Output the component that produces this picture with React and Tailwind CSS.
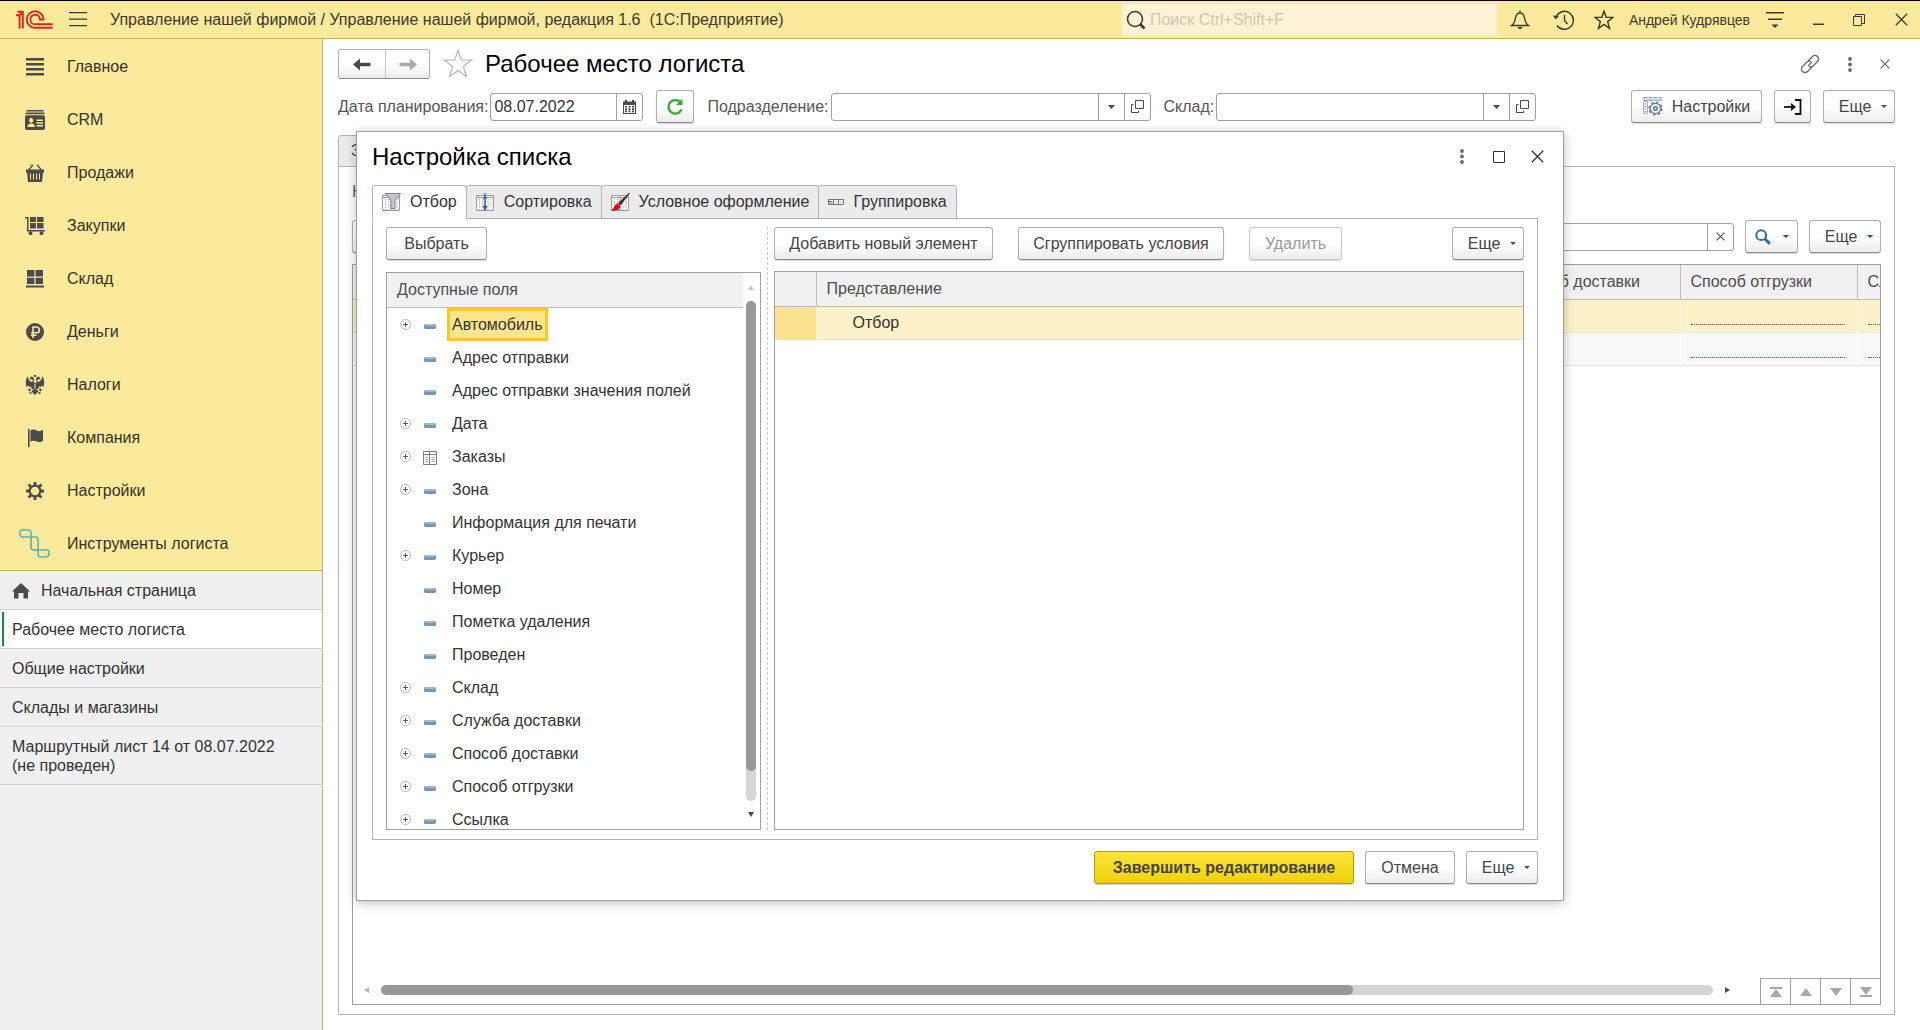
import React, { useState } from "react";

const sections = [
  { label: "Главное", icon: MainIcon },
  { label: "CRM", icon: CrmIcon },
  { label: "Продажи", icon: BasketIcon },
  { label: "Закупки", icon: CartIcon },
  { label: "Склад", icon: StockIcon },
  { label: "Деньги", icon: RubleIcon },
  { label: "Налоги", icon: EagleIcon },
  { label: "Компания", icon: FlagIcon },
  { label: "Настройки", icon: GearIcon },
  { label: "Инструменты логиста", icon: LogistIcon },
];

const openPages = [
  { label: "Начальная страница", home: true },
  { label: "Рабочее место логиста" },
  { label: "Общие настройки" },
  { label: "Склады и магазины" },
  { label: "Маршрутный лист 14 от 08.07.2022 (не проведен)" },
];

const fields = [
  { label: "Автомобиль", open: true },
  { label: "Адрес отправки" },
  { label: "Адрес отправки значения полей" },
  { label: "Дата", open: true },
  { label: "Заказы", open: true, table: true },
  { label: "Зона", open: true },
  { label: "Информация для печати" },
  { label: "Курьер", open: true },
  { label: "Номер" },
  { label: "Пометка удаления" },
  { label: "Проведен" },
  { label: "Склад", open: true },
  { label: "Служба доставки", open: true },
  { label: "Способ доставки", open: true },
  { label: "Способ отгрузки", open: true },
  { label: "Ссылка", open: true },
];

const dialogTabs = [
  { label: "Отбор", icon: FilterIcon },
  { label: "Сортировка", icon: SortIcon },
  { label: "Условное оформление", icon: BrushIcon },
  { label: "Группировка", icon: GroupIcon },
];

/* ---------- icons ---------- */

function Logo() {
  return (
    <svg width="37" height="19" viewBox="0 0 37 19" fill="none" stroke="#d9251d" strokeWidth="1.9">
      <path d="M0 5.2h3.6v13.3M1.5 1.8h5.3v16.7M3.6 5.2l2-2" />
      <path d="M27.4 9.6a8.3 8.3 0 1 0-8.4 8.2h17.7" />
      <path d="M24 9.6a4.8 4.8 0 1 0-4.9 4.7h17.6" />
      <path d="M28.3 9.6h-5.200" />
    </svg>
  );
}

function MainIcon() {
  return (
    <svg width="20" height="20" viewBox="0 0 20 20" fill="#4b4b4b">
      <path d="M1 1h18v2.4H1zM1 6h18v2.4H1zM1 11h18v2.4H1zM1 16h18v2.4H1z" />
    </svg>
  );
}

function CrmIcon() {
  return (
    <svg width="20" height="20" viewBox="0 0 20 20" fill="#4b4b4b">
      <path d="M2 0h16l1 1.6H1zM1 2.6h18l1 1.6H0z" />
      <rect y="5.2" width="20" height="14.8" rx="2" />
      <g fill="#fbe99c">
        <ellipse cx="6.2" cy="10.3" rx="2" ry="2.5" />
        <path d="M2.4 17c0-2.4 1.6-3 3.8-3.8C8.4 14 10 14.6 10 17zM11.5 9.5H18V11h-6.5zM11.5 12.2H18v1.5h-6.5zM11.5 15H18v1.5h-6.5z" />
      </g>
    </svg>
  );
}

function BasketIcon() {
  return (
    <svg width="20" height="20" viewBox="0 0 20 20">
      <path d="M3.500 7L7.500 2.500l-1-1M16.500 7l-4-4.500 1-1" fill="none" stroke="#4b4b4b" strokeWidth="1.3" />
      <path d="M1 6.5h18v3H1zM2 9.5h16l-1 9.500H3z" fill="#4b4b4b" />
      <path d="M5.5 10.5v6M8.5 10.5v6M11.5 10.5v6M14.5 10.5v6" stroke="#fbe99c" strokeWidth="1" />
    </svg>
  );
}

function CartIcon() {
  return (
    <svg width="20" height="20" viewBox="0 0 20 20" fill="#4b4b4b">
      <path d="M0 1h3.5v13H20v1.6H2V2.6H0z" />
      <path d="M5 1h6v5H5zM12 1h6.5v5H12zM5 7h6v5.5H5zM12 7h6.5v5.5H12z" />
      <circle cx="5.5" cy="17.2" r="1.9" />
      <circle cx="16.5" cy="17.2" r="1.9" />
    </svg>
  );
}

function StockIcon() {
  return (
    <svg width="20" height="20" viewBox="0 0 20 20" fill="#4b4b4b">
      <path d="M2 1h7.4v6.5H2zM10.6 1H18v6.5h-7.4zM2 8.7h7.4V15H2zM10.6 8.7H18V15h-7.4zM1 16.6h18v2H1z" />
    </svg>
  );
}

function RubleIcon() {
  return (
    <svg width="20" height="20" viewBox="0 0 20 20">
      <circle cx="10" cy="10" r="9" fill="#4b4b4b" />
      <path d="M8 16V5h3.5a2.9 2.9 0 0 1 0 5.8H6M6 13.3h5.5" fill="none" stroke="#fbe99c" strokeWidth="1.6" />
    </svg>
  );
}

function EagleIcon() {
  return (
    <svg width="20" height="20" viewBox="0 0 20 20" fill="#4b4b4b">
      <path d="M9 0h2v1.5L10 2.5 9 1.5zM6 1.5l2 .5 1 2v2.5L7 4.5 4.5 4zM14 1.5l-2 .5-1 2v2.5l2-2 2.5-.5z" />
      <path d="M2.5 1.5L4 5l2 2 2-1 2 2 2-1 .5-1 1.5 1 2-2 1.5-3.500C19.5 4 19.5 9 18.5 12l-2-1.5-.5 2-1.5-1.5-1 2.5L10 15l-3.5-1.5-1-2.5L4 12.5l-.5-2-2 1.5C.5 9 .5 4 2.5 1.5z" />
      <path d="M8 14.5h4l1.5 2L11 19l-1 1-1-1-2.5-2.500zM3 14l2.5-.5.5 2L4 16.5zM17 14l-2.5-.5-.5 2 2 1zM4 17.5l2-.5 1 1.500-2 .5zM16 17.5l-2-.5-1 1.500 2 .5z" />
      <path d="M9.5 8.5h1v5h-1z" fill="#fbe99c" />
    </svg>
  );
}

function FlagIcon() {
  return (
    <svg width="20" height="20" viewBox="0 0 20 20" fill="#4b4b4b">
      <path d="M3 1h1.6v18H3zM5.4 2.5c2.6-1.8 4.6-.7 6.6.1s4 .9 6-.8v11c-2 1.5-4 1.5-6 .7s-4-1.3-6.6.3z" />
    </svg>
  );
}

function GearIcon() {
  return (
    <svg width="20" height="20" viewBox="0 0 20 20" fill="none" stroke="#4b4b4b">
      <circle cx="10" cy="10" r="5.3" strokeWidth="2.2" />
      <path
        d="M10 1v3M10 16v3M1 10h3M16 10h3M3.6 3.6l2.2 2.2M14.2 14.2l2.2 2.2M3.6 16.4l2.2-2.2M14.2 5.8l2.2-2.2"
        strokeWidth="2.8"
      />
    </svg>
  );
}

function LogistIcon() {
  return (
    <svg width="32" height="30" viewBox="0 0 32 30" fill="none" stroke="#58b7b3" strokeWidth="1.6">
      <path d="M1 3a2 2 0 0 1 2-2h6a3 3 0 0 1 3 3v14a3 3 0 0 0 3 3h13a2 2 0 0 1 2 2v2a3 3 0 0 1-3 3H22a3 3 0 0 1-3-3V11a3 3 0 0 0-3-3H4a3 3 0 0 1-3-3z" />
      <path d="M12 8v10a3 3 0 0 0 3 3h4" opacity=".5" />
    </svg>
  );
}

function HomeIcon() {
  return (
    <svg width="18" height="16" viewBox="0 0 18 16" fill="#4b4b4b">
      <path d="M9 0l9 8.5h-2v7h-4.5V10h-5v5.5H2v-7H0z" />
    </svg>
  );
}

function SearchIcon() {
  return (
    <svg width="20" height="20" viewBox="0 0 20 20" fill="none" stroke="#3d3a2c">
      <circle cx="9" cy="9" r="7.5" strokeWidth="1.5" />
      <path d="M14 14l4.5 4.5" strokeWidth="2.6" />
    </svg>
  );
}

function BellIcon() {
  return (
    <svg width="20" height="20" viewBox="0 0 20 20" fill="none" stroke="#3d3a2c" strokeWidth="1.4">
      <path d="M10 .500v2M1.500 15.500c3-2 3.500-4.500 4-7.500.500-3.200 2-5 4.500-5s4 1.800 4.500 5c.500 3 1 5.500 4 7.500z" />
      <path d="M7 17h6l-3 2.6z" fill="#3d3a2c" stroke="none" />
    </svg>
  );
}

function HistoryIcon() {
  return (
    <svg width="22" height="20" viewBox="0 0 22 20" fill="none" stroke="#3d3a2c" strokeWidth="1.4">
      <path d="M4.5 6A9 9 0 1 1 5 15.5M12.5 5v5.5l3 3.5" />
      <path d="M1 5.5l6 .5-3.5 3.5z" fill="#3d3a2c" stroke="none" />
    </svg>
  );
}

function StarIcon({ size, color, width }) {
  return (
    <svg width={size} height={size} viewBox="0 0 20 20" fill="none" stroke={color} strokeWidth={width}>
      <path d="M10 .900l2.200 6.400 6.900.1-5.500 4.200 2 6.800-5.600-4-5.600 4 2-6.800L.900 7.400l6.900-.1z" />
    </svg>
  );
}

function ServiceMenuIcon() {
  return (
    <svg width="18" height="18" viewBox="0 0 18 18" fill="#3d3a2c">
      <path d="M0 1h18v1.4H0zM2 7.5h14v1.4H2zM5.5 13.5h7L9 17z" />
    </svg>
  );
}

function CloseIcon({ size = 13, color = "#3d3a2c", width = 1.3 }) {
  return (
    <svg width={size} height={size} viewBox="0 0 13 13" stroke={color} strokeWidth={width}>
      <path d="M.8.8l11.4 11.4M12.2.8L.8 12.2" />
    </svg>
  );
}

function DotsIcon() {
  return (
    <svg width="4" height="15" viewBox="0 0 4 15" fill="#6b6b6b">
      <circle cx="2" cy="2" r="1.9" />
      <circle cx="2" cy="7.5" r="1.9" />
      <circle cx="2" cy="13" r="1.9" />
    </svg>
  );
}

function LinkIcon() {
  return (
    <svg width="20" height="20" viewBox="0 0 20 20" fill="none" stroke="#6b6b6b" strokeWidth="1.4" strokeLinecap="round">
      <path d="M8.5 6.5l4-4a3.4 3.4 0 0 1 5 5l-4.500 4.500a3.4 3.4 0 0 1-3.5.8M11.5 13.5l-4 4a3.4 3.4 0 0 1-5-5L7 8a3.4 3.4 0 0 1 3.5-.8M8.500 11.500l3-3" />
    </svg>
  );
}

function ArrowIcon({ color, flip }) {
  return (
    <svg width="18" height="13" viewBox="0 0 18 13" fill={color} className={flip ? "rotate-180" : ""}>
      <path d="M0 6.5L7 .5v4.2h10.5v3.6H7v4.2z" />
    </svg>
  );
}

function Caret() {
  return (
    <svg width="6" height="3" viewBox="0 0 6 3" fill="#4b4b4b">
      <path d="M0 0h6L3 3z" />
    </svg>
  );
}

function DropIcon() {
  return (
    <svg width="7" height="4" viewBox="0 0 7 4" fill="#4b4b4b">
      <path d="M0 0h7L3.500 4z" />
    </svg>
  );
}

function OpenIcon() {
  return (
    <svg width="13" height="13" viewBox="0 0 13 13" fill="none" stroke="#4b4b4b" strokeWidth="1">
      <path d="M4.5.5h8v8h-8zM2.5 4.5h-2v8h7v-2" />
    </svg>
  );
}

function CalendarIcon() {
  return (
    <svg width="13" height="14" viewBox="0 0 13 14" fill="#4b4b4b">
      <path d="M2 0h2v2H2zM9 0h2v2H9zM0 1.5h13V14H0z" />
      <path d="M1 5h11v8H1z" fill="#fff" />
      <path d="M2 6h2v1.600H2zM5.500 6h2v1.600h-2zM9 6h2v1.600H9zM2 8.300h2v1.600H2zM5.500 8.300h2v1.600h-2zM9 8.300h2v1.600H9zM2 10.600h2v1.600H2zM5.500 10.600h2v1.600h-2zM9 10.600h2v1.600H9z" />
    </svg>
  );
}

function RefreshIcon() {
  return (
    <svg width="18" height="20" viewBox="0 0 18 20" fill="none" stroke="#3aaa35" strokeWidth="2.4">
      <path d="M14.5 5.5A6.8 6.8 0 1 0 15.5 12.5" />
      <path d="M16.5 1.5V8H10z" fill="#3aaa35" stroke="none" />
    </svg>
  );
}

function SettingsIcon() {
  return (
    <svg width="20" height="19" viewBox="0 0 20 19" fill="none">
      <path d="M.5.5h18v3H.5z" fill="#cfdbea" stroke="#93a5bd" strokeDasharray="4 1" />
      <path d="M.5 4.5h4v12h-4z" fill="#fff" stroke="#a9b4c4" />
      <path d="M1.5 7h2M1.5 9.5h2M1.5 12h2M1.5 14.5h2" stroke="#8a97aa" />
      <circle cx="12.5" cy="11.5" r="5.2" fill="#eef2f6" stroke="#6d7780" strokeWidth="1.2" />
      <circle cx="12.5" cy="11.5" r="6.4" stroke="#6d7780" strokeWidth="1.4" strokeDasharray="2.500 2.500" />
      <circle cx="12.5" cy="11.5" r="1.8" stroke="#50749a" strokeWidth="1.4" />
    </svg>
  );
}

function ExportIcon() {
  return (
    <svg width="18" height="16" viewBox="0 0 18 16" fill="none" stroke="#111" strokeWidth="1.8">
      <path d="M11 1h5.5v14H11" />
      <path d="M0 8h8" />
      <path d="M7 4l5 4-5 4z" fill="#111" stroke="none" />
    </svg>
  );
}

function LensIcon() {
  return (
    <svg width="16" height="16" viewBox="0 0 16 16" fill="none" stroke="#2d6ea3">
      <circle cx="6.2" cy="6.2" r="4.9" strokeWidth="2" />
      <path d="M9.8 9.8l5 5" strokeWidth="3" />
    </svg>
  );
}

function Sheet() {
  return (
    <>
      <path d="M.5 2.5h17v15H.5z" fill="#fff" stroke="#9a9a9a" />
      <path d="M.5 4.5h17M9 2.5v15" stroke="#9a9a9a" />
      <path d="M3.5 6v11M6.5 6v11M12 6v11M15 6v11" stroke="#b5b5b5" strokeDasharray="1 1" />
    </>
  );
}

function FilterIcon() {
  return (
    <svg width="19" height="19" viewBox="0 0 19 19" fill="none">
      <Sheet />
      <path d="M3 .5h15.5L13 7v8.500H9V7z" fill="#c3c6ca" stroke="#85898e" />
    </svg>
  );
}

function SortIcon() {
  return (
    <svg width="19" height="19" viewBox="0 0 19 19" fill="none">
      <Sheet />
      <path d="M7 3h4v14H7z" fill="#fff" />
      <path d="M9 3v12" stroke="#2c5f9e" strokeWidth="1.6" />
      <path d="M6.5 13h5L9 18zM6.5 5.5h5L9 2z" fill="#2c5f9e" />
      <path d="M7.5 0l1.5 2L10.5 0" stroke="#777" />
    </svg>
  );
}

function BrushIcon() {
  return (
    <svg width="19" height="19" viewBox="0 0 19 19" fill="none">
      <Sheet />
      <path d="M18.5 0L7.5 10l2 2z" fill="#4a2a22" stroke="#4a2a22" />
      <path d="M6.5 10.5l3 2.5c0 3-4 5.5-9.5 4.5 3-1.5 3-6 6.5-7z" fill="#e30613" />
    </svg>
  );
}

function GroupIcon() {
  return (
    <svg width="16" height="6" viewBox="0 0 16 6" fill="#fff" stroke="#70757c">
      <path d="M.5.5h5v5h-5zM5.5.5h5v5h-5zM10.5.5h5v5h-5z" />
      <path d="M1 2.500h3.500M1 4h3.500M7.500 3h1M12.500 3h1" />
    </svg>
  );
}

function ExpandIcon() {
  return (
    <svg width="11" height="11" viewBox="0 0 11 11" fill="none">
      <circle cx="5.5" cy="5.5" r="5" stroke="#b4b4b4" />
      <path d="M3 5.5h5M5.5 3v5" stroke="#5c5c5c" />
    </svg>
  );
}

function FieldIcon() {
  return (
    <svg width="12" height="5" viewBox="0 0 12 5">
      <rect width="12" height="5" rx="1.5" fill="#7599b5" />
      <rect x="1" width="10" height="2" rx="1" fill="#9fbacd" />
    </svg>
  );
}

function TableIcon() {
  return (
    <svg width="14" height="14" viewBox="0 0 14 14" fill="none" stroke="#7b7b8c">
      <path d="M.5.5h13v13H.5zM.5 3.5h13M6.500.5v13" />
      <path d="M2 6.5h3M2 8.5h3M2 10.5h3M8.5 6.5H12M8.5 8.5H12M8.5 10.5H12" stroke="#b0b0bd" />
    </svg>
  );
}

/* ---------- controls ---------- */

function Button({ children, className = "px-4", ...props }) {
  return (
    <button
      type="button"
      className={`h-[33px] shrink-0 flex items-center justify-center rounded-[3px] border border-[#b0b0b0] border-b-[#8a8a8a] bg-linear-to-b from-white from-50% to-[#ececec] text-[#444] shadow-[0_1px_1px_rgba(0,0,0,0.15)] whitespace-nowrap disabled:text-[#999] disabled:border-[#c8c8c8] ${className}`}
      {...props}
    >
      {children}
    </button>
  );
}

function MoreButton({ className = "w-[72px]" }) {
  return (
    <Button className={`gap-[10px] pl-2 ${className}`}>
      Еще
      <Caret />
    </Button>
  );
}

function PickerField({ id, label }) {
  return (
    <div className="flex items-center">
      <label htmlFor={id} className="mr-[2px] text-[#555]">{label}</label>
      <div className="flex h-7 w-[320px] rounded-[3px] border border-[#a0a0a0]">
        <input id={id} type="text" className="min-w-0 flex-1 px-1 outline-none" />
        <button type="button" aria-label="Выбрать из списка" className="w-[26px] flex items-center justify-center border-l border-[#a0a0a0]">
          <DropIcon />
        </button>
        <button type="button" aria-label="Открыть" className="w-[26px] flex items-center justify-center border-l border-[#a0a0a0]">
          <OpenIcon />
        </button>
      </div>
    </div>
  );
}

/* ---------- page parts ---------- */

function Header() {
  return (
    <header className="flex h-[39px] shrink-0 items-center border-t border-b border-t-black border-b-[#c9b36a] bg-[#fbe99c] text-[#3d3a2c]">
      <div className="ml-4"><Logo /></div>
      <button type="button" aria-label="Меню" className="ml-4">
        <svg width="18" height="15" viewBox="0 0 18 15" fill="#3d3a2c">
          <path d="M0 0h18v1.3H0zM0 6.5h18v1.3H0zM0 13h18v1.3H0z" />
        </svg>
      </button>
      <span className="ml-[23px] whitespace-nowrap">
        Управление нашей фирмой / Управление нашей фирмой, редакция 1.6&nbsp; (1С:Предприятие)
      </span>
      <label className="ml-auto flex h-8 w-[375px] items-center rounded-[2px] bg-[#fdf2d3] pl-1">
        <SearchIcon />
        <input
          type="text"
          aria-label="Поиск"
          placeholder="Поиск Ctrl+Shift+F"
          className="ml-1 min-w-0 flex-1 bg-transparent outline-none placeholder:text-[#cfc6b4]"
        />
      </label>
      <button type="button" aria-label="Уведомления" className="flex w-[46px] justify-center"><BellIcon /></button>
      <button type="button" aria-label="История" className="flex w-10 justify-center"><HistoryIcon /></button>
      <button type="button" aria-label="Избранное" className="flex w-[42px] justify-center">
        <StarIcon size="20" color="#3d3a2c" width="1.4" />
      </button>
      <span className="ml-1 text-sm whitespace-nowrap">Андрей Кудрявцев</span>
      <button type="button" aria-label="Сервис" className="flex w-[50px] justify-center"><ServiceMenuIcon /></button>
      <button type="button" aria-label="Свернуть" className="flex w-9 justify-center">
        <svg width="11" height="10" viewBox="0 0 11 10" fill="#3d3a2c"><path d="M0 8.5h11V10H0z" /></svg>
      </button>
      <button type="button" aria-label="Восстановить" className="flex w-[46px] justify-center">
        <svg width="12" height="12" viewBox="0 0 12 12" fill="none" stroke="#3d3a2c">
          <path d="M.5 2.5h8v9h-8zM2.5 2.5v-2h9v9h-3" />
        </svg>
      </button>
      <button type="button" aria-label="Закрыть" className="flex w-[38px] justify-center"><CloseIcon /></button>
    </header>
  );
}

function Sidebar() {
  return (
    <aside className="flex w-[323px] shrink-0 flex-col border-r border-[#c9b36a] bg-[#f0f0f0]">
      <nav className="border-b border-[#c9b36a] bg-[#fbe99c] pt-px text-[#33332b]">
        {sections.map(({ label, icon: Icon }) => (
          <a key={label} href="#" className="flex h-[53px] items-center">
            <span className="flex w-[67px] justify-center pl-[3px]"><Icon /></span>
            {label}
          </a>
        ))}
      </nav>
      <nav className="text-[#333]">
        {openPages.map((page, i) => (
          <a
            key={page.label}
            href="#"
            className={`relative flex items-center border-b border-[#d3d3d3] pt-[10px] pr-8 pb-[9px] pl-3 leading-[19px] ${i === 1 ? "bg-white" : ""}`}
          >
            {i === 1 && <span className="absolute left-[2px] top-[2px] bottom-[2px] w-[2px] bg-[#0a9448]" />}
            {page.home && <span className="mr-[11px]"><HomeIcon /></span>}
            {page.label}
          </a>
        ))}
      </nav>
    </aside>
  );
}

function OrdersTable() {
  return (
    <div className="mt-[11px] flex min-h-0 flex-1 flex-col overflow-hidden border border-[#a0a0a0]">
      <table className="w-full table-fixed text-left text-[#4d4d4d]">
        <colgroup>
          <col />
          <col className="w-[177px]" />
          <col className="w-[177px]" />
          <col className="w-[23px]" />
        </colgroup>
        <thead>
          <tr className="h-[34px] bg-[#f1f1f1]">
            <th className="border-b border-[#bdbdbd]" />
            {["Способ доставки", "Способ отгрузки", "Служба доставки"].map((name) => (
              <th key={name} className="overflow-hidden border-b border-l border-[#bdbdbd] pl-[10px] font-normal whitespace-nowrap">
                {name}
              </th>
            ))}
          </tr>
        </thead>
        <tbody>
          {["bg-[#fcf1c8]", "bg-[#f9f9f9]"].map((bg) => (
            <tr key={bg} className={`h-[33px] border-b border-[#e4e4e4] ${bg}`}>
              <td />
              <td />
              <td className="border-l border-white/60 px-[10px] pb-[7px] align-bottom">
                <div className="mr-[2px] border-b border-dotted border-[#b4473c]" />
              </td>
              <td className="border-l border-white/60 pb-[7px] pl-[10px] align-bottom">
                <div className="border-b border-dotted border-[#b4473c]" />
              </td>
            </tr>
          ))}
        </tbody>
      </table>
      <div className="mt-auto flex items-end">
        <div className="flex h-7 flex-1 items-center pr-[30px] pl-[11px]">
          <svg width="6" height="6" viewBox="0 0 6 6" fill="#b9b9b9"><path d="M5 0v6L0 3z" /></svg>
          <div className="mx-[11px] h-[10px] flex-1 rounded-full bg-[#d5d5d5]">
            <div className="h-full w-[73%] rounded-full bg-[#989898]" />
          </div>
          <svg width="6" height="6" viewBox="0 0 6 6" fill="#4b4b4b"><path d="M1 0v6l5-3z" /></svg>
        </div>
        <div className="flex h-[26px] border-t border-[#a0a0a0]">
          {[
            ["В начало", "M1 0h12v2H1zM7 2l6 8H1z"],
            ["Вверх", "M7 1l6 8H1z"],
            ["Вниз", "M7 9L1 1h12z"],
            ["В конец", "M7 8L1 0h12zM1 8h12v2H1z"],
          ].map(([name, d]) => (
            <button key={name} type="button" aria-label={name} className="flex w-[30px] items-center justify-center border-l border-[#a0a0a0]">
              <svg width="14" height="10" viewBox="0 0 14 10" fill="#a8a8a8"><path d={d} /></svg>
            </button>
          ))}
        </div>
      </div>
    </div>
  );
}

function Workplace() {
  return (
    <div className="flex min-w-0 flex-1 flex-col pt-[10px] pr-[25px] pb-[15px] pl-[15px]">
      <div className="flex items-center">
        <div className="flex h-[30px] rounded-[3px] border border-[#b0b0b0] border-b-[#8a8a8a] bg-linear-to-b from-white from-50% to-[#ececec]">
          <button type="button" aria-label="Назад" className="flex w-[46px] items-center justify-center"><ArrowIcon color="#4b4b4b" /></button>
          <button type="button" aria-label="Вперед" className="flex w-11 items-center justify-center border-l border-[#c8c8c8]">
            <ArrowIcon color="#ababab" flip />
          </button>
        </div>
        <button type="button" aria-label="В избранное" className="ml-[13px]"><StarIcon size="30" color="#b5b5b5" width="0.8" /></button>
        <h1 className="ml-3 text-2xl leading-[30px] text-black">Рабочее место логиста</h1>
        <div className="ml-auto flex items-center gap-7 pr-[5px]">
          <button type="button" aria-label="Ссылка"><LinkIcon /></button>
          <button type="button" aria-label="Еще"><DotsIcon /></button>
          <button type="button" aria-label="Закрыть"><CloseIcon size={10} color="#6b6b6b" width={1.6} /></button>
        </div>
      </div>

      <div className="mt-[11px] flex items-center">
        <label htmlFor="plan-date" className="mr-[2px] text-[#555]">Дата планирования:</label>
        <div className="flex h-7 w-[153px] rounded-[3px] border border-[#a0a0a0]">
          <input id="plan-date" type="text" defaultValue="08.07.2022" className="min-w-0 flex-1 px-[3px] text-[#333] outline-none" />
          <button type="button" aria-label="Календарь" className="flex w-[26px] items-center justify-center border-l border-[#a0a0a0]">
            <CalendarIcon />
          </button>
        </div>
        <Button className="mx-[13px] w-[38px]" aria-label="Обновить"><RefreshIcon /></Button>
        <PickerField id="department" label="Подразделение:" />
        <div className="w-[13px]" />
        <PickerField id="warehouse" label="Склад:" />
        <div className="ml-auto flex gap-3">
          <Button className="w-[131px] gap-[9px]"><SettingsIcon />Настройки</Button>
          <Button className="w-[37px]" aria-label="Выгрузить"><ExportIcon /></Button>
          <MoreButton />
        </div>
      </div>

      <div className="mt-3 -mb-px flex">
        <button type="button" className="h-8 rounded-t-[3px] border border-[#b4b4b4] bg-[#ebebeb] px-3 text-[#444]">Заказы</button>
      </div>
      <div className="flex min-h-0 flex-1 flex-col border border-[#b4b4b4] px-[13px] pt-[15px] pb-[9px]">
        <a href="#" className="self-start leading-5 text-[#2d6ea3]">Настройки</a>
        <div className="mt-[18px] flex items-center">
          <Button className="w-[101px]" aria-label="Создать" />
          <div className="ml-auto flex h-7 w-[420px] rounded-[3px] border border-[#a0a0a0]">
            <input type="text" aria-label="Поиск в списке" className="min-w-0 flex-1 px-1 outline-none" />
            <button type="button" aria-label="Очистить" className="flex w-[26px] items-center justify-center border-l border-[#a0a0a0]">
              <CloseIcon size={9} color="#4b4b4b" width={1.6} />
            </button>
          </div>
          <Button className="mx-[11px] w-[53px] gap-3" aria-label="Найти"><LensIcon /><Caret /></Button>
          <MoreButton />
        </div>
        <OrdersTable />
      </div>
    </div>
  );
}

function FieldTree() {
  const [selected, setSelected] = useState("Автомобиль");

  return (
    <div className="mt-3 flex min-h-0 flex-1 border border-[#a0a0a0]">
      <div className="flex min-w-0 flex-1 flex-col">
        <div className="h-[35px] shrink-0 border-b border-[#bdbdbd] bg-[#f1f1f1] pl-[10px] leading-[33px] text-[#4d4d4d]">Доступные поля</div>
        <ul className="min-h-0 flex-1 basis-0 overflow-hidden text-[#333]">
          {fields.map((field) => (
            <li key={field.label} className="flex h-[33px] items-center pl-[13px]">
              <span className="w-[11px]">{field.open && <ExpandIcon />}</span>
              <span className="flex w-9 justify-center pt-[3px] pr-1 pl-[6px]">{field.table ? <TableIcon /> : <FieldIcon />}</span>
              <button
                type="button"
                onClick={() => setSelected(field.label)}
                className={`h-[33px] border-[3px] px-[2px] whitespace-nowrap ${
                  selected === field.label ? "border-[#f3c92e] bg-[#fbe58f]" : "border-transparent"
                }`}
              >
                {field.label}
              </button>
            </li>
          ))}
        </ul>
      </div>
      <div className="flex w-[17px] shrink-0 flex-col items-center py-[12px] pr-px">
        <svg width="6" height="5" viewBox="0 0 6 5" fill="#c4c4c4"><path d="M3 0l3 5H0z" /></svg>
        <div className="my-[11px] w-[10px] flex-1 rounded-full bg-[#d5d5d5]">
          <div className="h-[94%] rounded-full bg-[#989898]" />
        </div>
        <svg width="6" height="5" viewBox="0 0 6 5" fill="#4b4b4b"><path d="M3 5L0 0h6z" /></svg>
      </div>
    </div>
  );
}

function ListSettingsDialog() {
  const [tab, setTab] = useState("Отбор");

  return (
    <div
      role="dialog"
      aria-label="Настройка списка"
      className="absolute top-[92px] right-[356px] bottom-[129px] left-[33px] flex flex-col border border-[#a0a0a0] bg-white pr-[25px] pb-4 pl-[15px] shadow-[0_2px_10px_rgba(0,0,0,0.25)]"
    >
      <div className="mb-1 flex h-[49px] shrink-0 items-center">
        <h2 className="text-2xl text-black">Настройка списка</h2>
        <div className="-mr-[6px] ml-auto flex items-center gap-[26px]">
          <button type="button" aria-label="Еще" className="mr-[3px]"><DotsIcon /></button>
          <button type="button" aria-label="Развернуть">
            <svg width="12" height="12" viewBox="0 0 12 12" fill="none" stroke="#333"><path d="M.5.5h11v11H.5z" /></svg>
          </button>
          <button type="button" aria-label="Закрыть"><CloseIcon color="#333" /></button>
        </div>
      </div>

      <div className="relative z-10 -mb-px flex h-[34px] shrink-0" role="tablist">
        {dialogTabs.map(({ label, icon: Icon }) => (
          <button
            key={label}
            type="button"
            role="tab"
            aria-selected={tab === label}
            onClick={() => setTab(label)}
            className={`-mr-px flex items-center gap-[9px] rounded-t-[3px] border border-[#b4b4b4] px-[9px] text-[#333] whitespace-nowrap ${
              tab === label ? "border-b-white bg-white" : "bg-[#ebebeb]"
            }`}
          >
            <Icon />
            {label}
          </button>
        ))}
      </div>

      <div className="flex min-h-0 flex-1 border border-[#b4b4b4] px-[13px] pt-2 pb-[9px]">
        <div className="flex w-[375px] shrink-0 flex-col">
          <Button className="w-[101px] self-start">Выбрать</Button>
          <FieldTree />
        </div>
        <div className="mx-[6px] border-l border-dashed border-[#c8c8c8]" />
        <div className="flex min-w-0 flex-1 flex-col">
          <div className="flex">
            <Button className="w-[219px]">Добавить новый элемент</Button>
            <Button className="ml-[25px] w-[206px]">Сгруппировать условия</Button>
            <Button className="ml-[25px] w-[93px]" disabled>Удалить</Button>
            <MoreButton className="ml-auto w-[72px]" />
          </div>
          <div className="mt-[11px] min-h-0 flex-1 border border-[#a0a0a0]">
            <table className="w-full table-fixed text-left">
              <colgroup>
                <col className="w-[41px]" />
                <col />
              </colgroup>
              <thead>
                <tr className="h-[34px] bg-[#f1f1f1] text-[#4d4d4d]">
                  <th className="border-b border-[#bdbdbd]" />
                  <th className="border-b border-l border-[#bdbdbd] pl-[10px] font-normal">Представление</th>
                </tr>
              </thead>
              <tbody>
                <tr className="h-[33px] border-b border-[#e4e4e4] bg-[#fcf1c8] text-[#333]">
                  <td className="bg-[#fce28f]" />
                  <td className="border-l border-[#fdf6dc] pl-9">Отбор</td>
                </tr>
              </tbody>
            </table>
          </div>
        </div>
      </div>

      <div className="mt-[11px] flex shrink-0 justify-end gap-[11px]">
        <button
          type="button"
          className="h-[33px] w-[260px] rounded-[3px] border border-[#b39b00] bg-linear-to-b from-[#ffe535] to-[#ecd200] font-bold text-[#444] shadow-[0_1px_1px_rgba(0,0,0,0.2)]"
        >
          Завершить редактирование
        </button>
        <Button className="w-[90px]">Отмена</Button>
        <MoreButton />
      </div>
    </div>
  );
}

export default function App() {
  return (
    <div className="flex h-screen flex-col overflow-hidden bg-white font-['Liberation_Sans',Arial,sans-serif] text-base">
      <Header />
      <div className="flex min-h-0 flex-1">
        <Sidebar />
        <main className="relative flex min-w-0 flex-1">
          <Workplace />
          <ListSettingsDialog />
        </main>
      </div>
    </div>
  );
}
